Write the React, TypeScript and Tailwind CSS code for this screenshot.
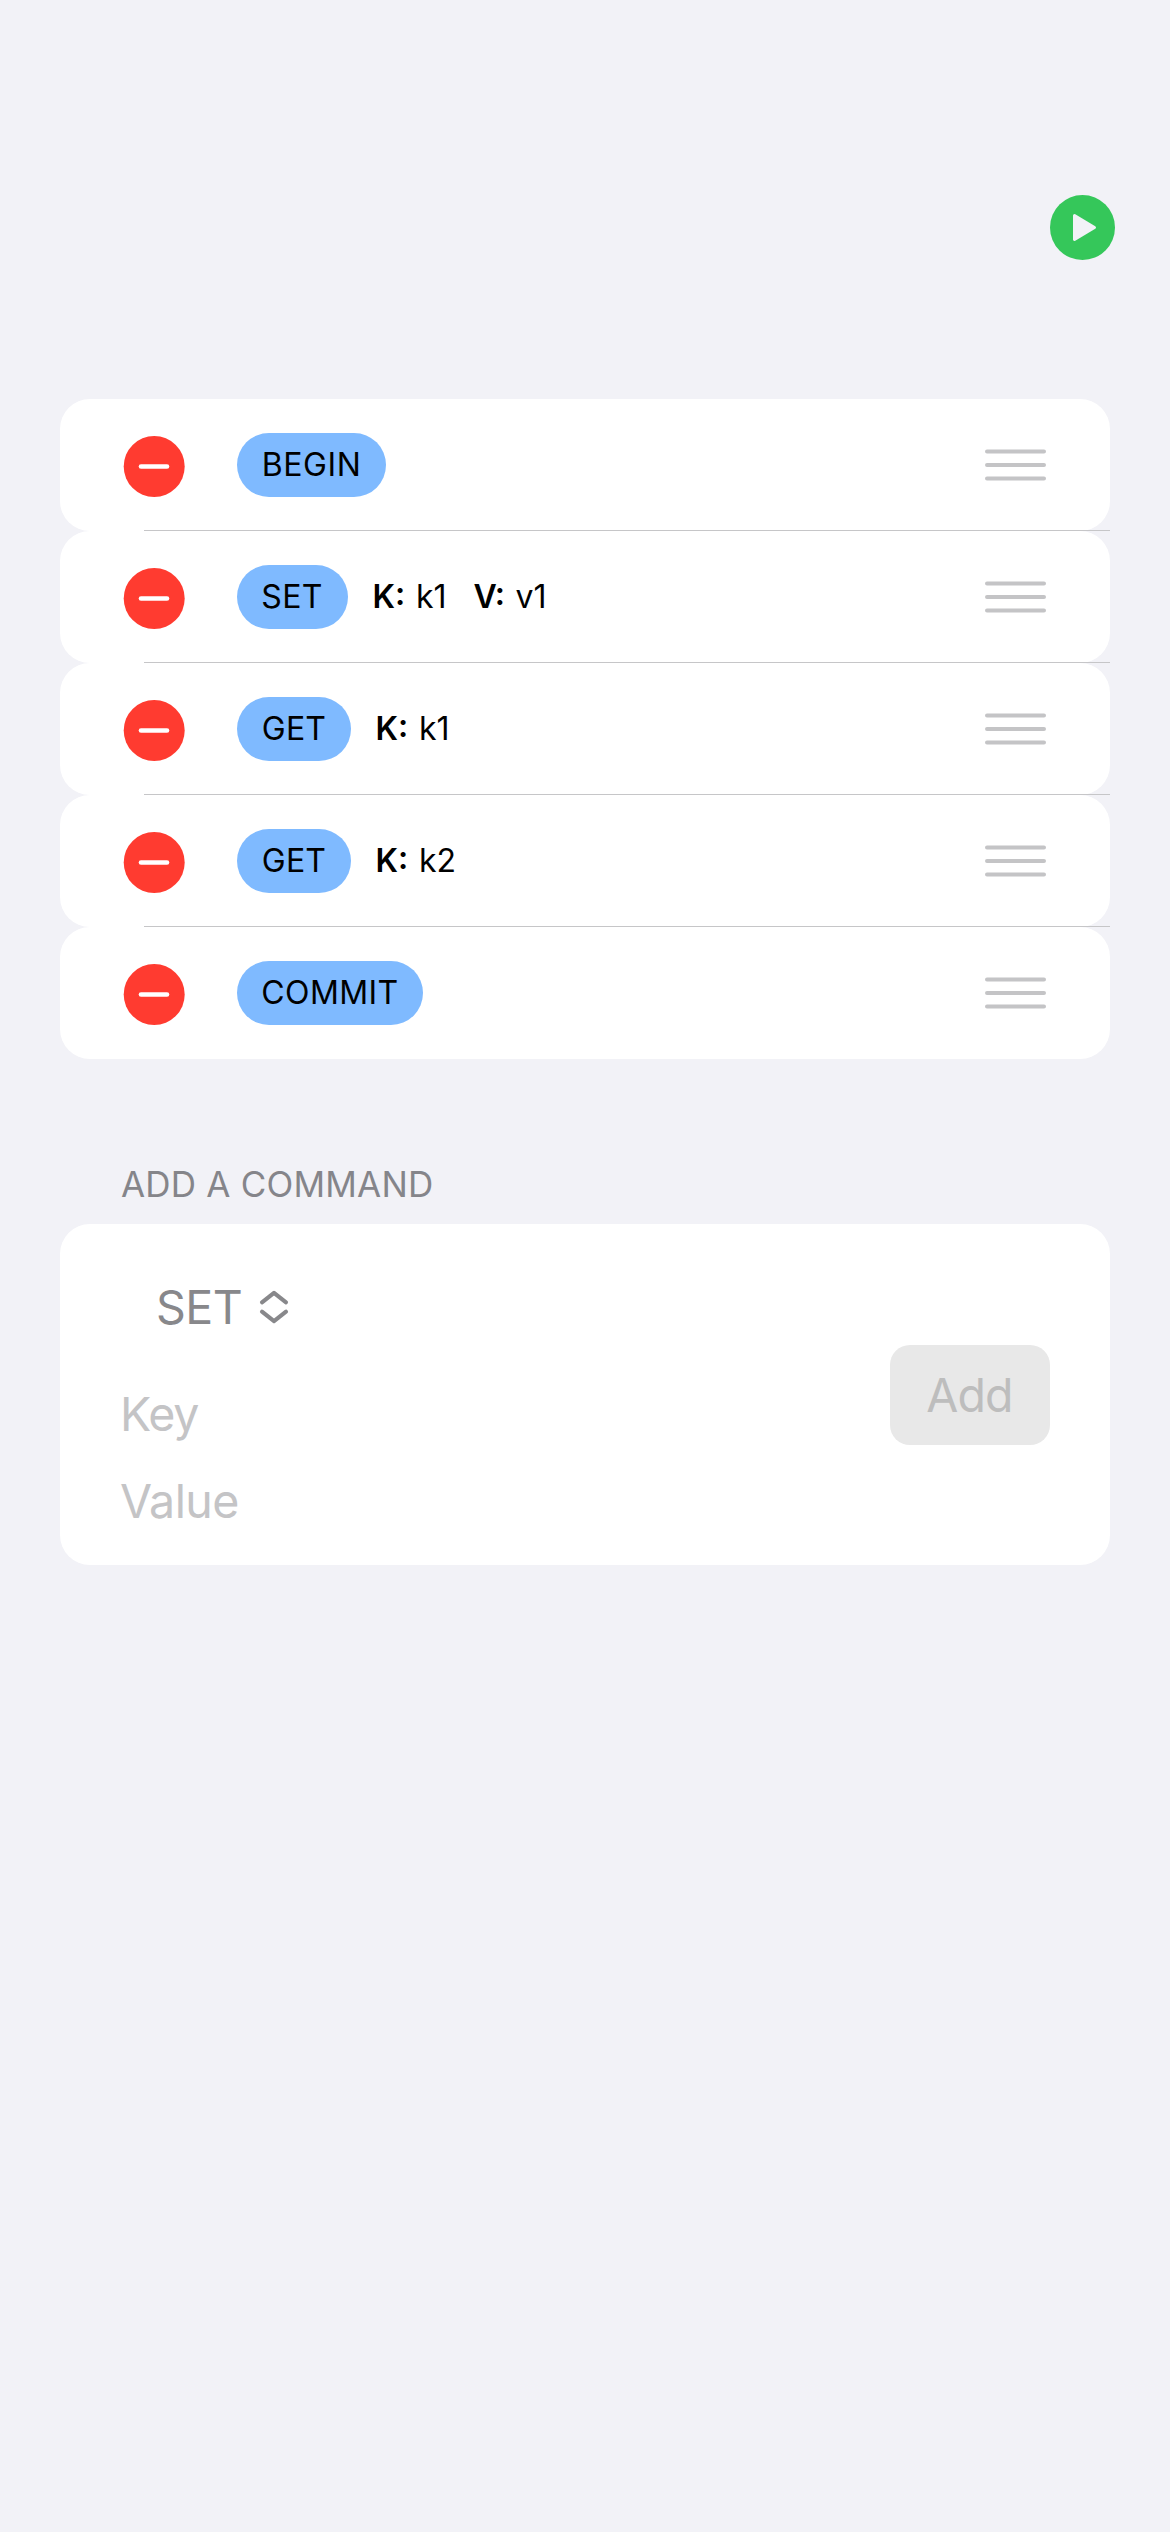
type Arg = { name: string; value: string; nameClass: string; valueClass: string };
type Command = { label: string; pill: string; args: Arg[] };

const K1: Arg = { name: "K:", value: "k1", nameClass: "w-[43.5px]", valueClass: "w-[57.5px]" };
const K2: Arg = { ...K1, value: "k2" };
const V1: Arg = { name: "V:", value: "v1", nameClass: "w-[42px]", valueClass: "w-[57px]" };

const commands: Command[] = [
  { label: "BEGIN", pill: "w-[149px] tracking-[0.6px]", args: [] },
  { label: "SET", pill: "w-[111px] tracking-[0.3px] pr-[1px]", args: [K1, V1] },
  { label: "GET", pill: "w-[114px] tracking-[0.2px]", args: [K1] },
  { label: "GET", pill: "w-[114px] tracking-[0.2px]", args: [K2] },
  { label: "COMMIT", pill: "w-[186px] tracking-[0.4px]", args: [] },
];

function CommandRow({ command, last }: { command: Command; last: boolean }) {
  return (
    <li className="relative flex h-[132px] items-start rounded-[30px] bg-white pl-[63px] pr-16">
      <button aria-label="Delete" className="mt-[36px] h-[62px] w-[62px] shrink-0">
        <svg viewBox="0 0 62 62" className="h-full w-full">
          <circle cx="31.2" cy="31.5" r="30.5" fill="#ff3b30" />
          <path d="M18 31.5H44" stroke="#fff" strokeWidth="4.6" strokeLinecap="round" />
        </svg>
      </button>
      <span
        className={`ml-[52px] mt-[34px] h-16 shrink-0 rounded-full bg-[#7fbaff] text-center leading-[64px] ${command.pill}`}
      >
        {command.label}
      </span>
      <span className="mt-[34px] flex grow pl-[24.5px] leading-[64px]">
        {command.args.map((a) => (
          <span key={a.name} className="flex">
            <span className={`font-semibold ${a.nameClass}`}>{a.name}</span>
            <span className={a.valueClass}>{a.value}</span>
          </span>
        ))}
      </span>
      <svg viewBox="0 0 61 32" className="mt-[50px] h-[32px] w-[61px] shrink-0">
        <path d="M2 2.5H59M2 16H59M2 29.5H59" stroke="#c4c4c6" strokeWidth="4" strokeLinecap="round" />
      </svg>
      {!last && <span className="absolute bottom-0 left-[84px] right-0 h-px bg-[#c6c6c8]" />}
    </li>
  );
}

export default function App() {
  return (
    <main className="flex min-h-[2532px] w-[1170px] flex-col bg-[#f2f2f7] px-[60px] pt-[195px] font-['Inter',sans-serif] text-[32px] text-black">
      <button aria-label="Run" className="-mr-[5px] h-[65px] w-[65px] self-end">
        <svg viewBox="0 0 65 65" className="h-full w-full">
          <circle cx="32.5" cy="32.5" r="32.5" fill="#35c75a" />
          <path
            d="M24.5 20.5L44.5 32.5L24.5 44.5Z"
            fill="#f2f2f7"
            stroke="#f2f2f7"
            strokeWidth="3"
            strokeLinejoin="round"
          />
        </svg>
      </button>

      <ul className="mt-[139px]">
        {commands.map((c, i) => (
          <CommandRow key={i} command={c} last={i === commands.length - 1} />
        ))}
      </ul>

      <h2 className="mt-[100px] h-[65px] pl-[61px] text-[35px] leading-[50px] tracking-[0.2px] text-[#85858a]">
        ADD A COMMAND
      </h2>

      <section className="flex h-[341px] justify-between rounded-[30px] bg-white px-[60px] text-[46.5px] tracking-[-0.9px]">
        <div className="flex flex-col">
          <button className="mt-[53px] flex h-[60px] items-center pl-[36px] leading-[60px] tracking-[-0.5px] text-[#88888b]">
            <span className="w-[103px] text-left">SET</span>
            <svg viewBox="0 0 30 34" className="h-[34px] w-[30px]" fill="none">
              <path
                d="M3 12.3L15 2.8L27 12.3M3 21.7L15 31.2L27 21.7"
                stroke="#88888b"
                strokeWidth="4.1"
                strokeLinecap="round"
                strokeLinejoin="round"
              />
            </svg>
          </button>
          <input
            placeholder="Key"
            className="mt-[47px] h-[60px] w-[500px] bg-transparent leading-[60px] tracking-[-1.2px] outline-none placeholder:text-[#c4c4c6]"
          />
          <input
            placeholder="Value"
            className="mt-[27px] h-[60px] w-[500px] bg-transparent leading-[60px] tracking-[-0.6px] outline-none placeholder:text-[#c4c4c6]"
          />
        </div>
        <button className="mt-[121px] h-[100px] w-[160px] rounded-[20px] bg-[#e8e8e8] pr-[1px] text-center leading-[99px] text-[#bdbdbd]">
          Add
        </button>
      </section>
    </main>
  );
}
